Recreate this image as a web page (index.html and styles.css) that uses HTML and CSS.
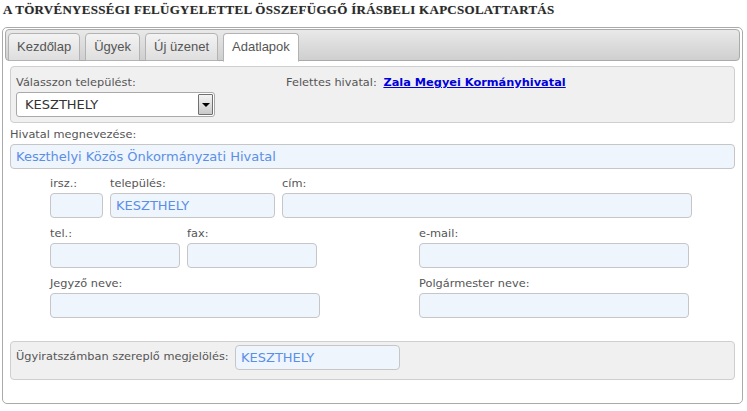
FILE: index.html
```html
<!DOCTYPE html>
<html lang="hu">
<head>
<meta charset="utf-8">
<title>Adatlapok</title>
<link rel="stylesheet" href="styles.css">
</head>
<body>
<h1 class="page-title">A törvényességi felügyelettel összefüggő írásbeli kapcsolattartás</h1>
<div class="widget">
  <div class="tabbar">
    <div class="tab">Kezdőlap</div>
    <div class="tab">Ügyek</div>
    <div class="tab">Új üzenet</div>
    <div class="tab active">Adatlapok</div>
  </div>
  <div class="tab-body">
    <div class="panel panel-top">
      <div class="pick">
        <div class="label">Válasszon települést:</div>
        <div class="select">
          <span class="select-text">KESZTHELY</span>
          <span class="select-btn"><span class="caret"></span></span>
        </div>
      </div>
      <div class="parent">
        <span class="label">Felettes hivatal:</span>
        <a class="link" href="#">Zala Megyei Kormányhivatal</a>
      </div>
    </div>

    <div class="label name-label">Hivatal megnevezése:</div>
    <div class="input full">Keszthelyi Közös Önkormányzati Hivatal</div>

    <div class="fields">
      <div class="row">
        <div class="field w-irsz"><div class="label">irsz.:</div><div class="input"></div></div>
        <div class="field w-telep"><div class="label">település:</div><div class="input">KESZTHELY</div></div>
        <div class="field w-cim"><div class="label">cím:</div><div class="input"></div></div>
      </div>
      <div class="row">
        <div class="field w-tel"><div class="label">tel.:</div><div class="input"></div></div>
        <div class="field w-tel"><div class="label">fax:</div><div class="input"></div></div>
        <div class="field w-wide right-col"><div class="label">e-mail:</div><div class="input"></div></div>
      </div>
      <div class="row">
        <div class="field w-jegyzo"><div class="label">Jegyző neve:</div><div class="input"></div></div>
        <div class="field w-wide right-col2"><div class="label">Polgármester neve:</div><div class="input"></div></div>
      </div>
    </div>

    <div class="panel panel-bottom">
      <div class="label mark-label">Ügyiratszámban szereplő megjelölés:</div>
      <div class="input w-mark">KESZTHELY</div>
    </div>
  </div>
</div>
</body>
</html>
```

FILE: styles.css
```css
* { box-sizing: border-box; }

body {
  margin: 0;
  background: #fff;
  font-family: "DejaVu Sans", Verdana, sans-serif;
  font-size: 11.35px;
  color: #555;
}

.page-title {
  margin: 0;
  padding: 1px 0 0 3px;
  font-family: "Liberation Serif", "Times New Roman", serif;
  font-size: 13px;
  line-height: 18px;
  font-weight: bold;
  letter-spacing: 0.28px;
  text-transform: uppercase;
  color: #2a2a2a;
  text-shadow: 0 0 1px rgba(0,0,0,0.25);
}

.widget {
  margin: 8px 0 0 2px;
  width: 741px;
  border: 1px solid #aaa;
  border-radius: 5px;
  padding: 1px 2px 0 2px;
}

.tabbar {
  display: flex;
  gap: 5px;
  height: 32px;
  padding: 3px 2px 0 2px;
  border: 1px solid #aaa;
  border-radius: 4px;
  background: linear-gradient(#e9e9e9, #cfcfcf);
  align-items: flex-start;
}

.tab {
  height: 28px;
  padding: 0 8px;
  border: 1px solid #b3b3b3;
  border-radius: 4px 4px 0 0;
  background: linear-gradient(#f3f3f3, #dedede);
  font-family: "Liberation Sans", Arial, sans-serif;
  font-size: 13px;
  line-height: 26px;
  color: #555;
}

.tab.active {
  height: 29px;
  background: #fff;
  border-bottom-color: #fff;
}

.tab-body {
  padding: 5px 5px 23px 5px;
}

.panel {
  border: 1px solid #cfcfcf;
  border-radius: 4px;
  background: #f0f0f0;
}

.panel-top {
  display: flex;
  padding: 8px 5px 5px 5px;
}

.pick { width: 270px; }

.label {
  line-height: 15px;
  color: #555;
}

.pick .label { margin-bottom: 2px; }

.select {
  display: flex;
  align-items: center;
  justify-content: space-between;
  width: 199px;
  height: 25px;
  border: 1px solid #a9a9a9;
  border-radius: 3px;
  background: #fff;
  padding: 0 1px 0 8px;
  font-size: 13px;
  color: #333;
}

.select-btn {
  display: flex;
  align-items: center;
  justify-content: center;
  width: 15px;
  height: 21px;
  border: 1px solid #707070;
  border-radius: 1px;
  background: linear-gradient(#f4f4f4, #c9c9c9);
}

.caret {
  width: 0;
  height: 0;
  border-left: 4px solid transparent;
  border-right: 4px solid transparent;
  border-top: 4px solid #000;
}

.parent {
  line-height: 15px;
}

.link {
  margin-left: 3px;
  font-weight: bold;
  color: #0000dd;
  text-decoration: underline;
}

.name-label {
  margin-top: 4px;
  margin-bottom: 2px;
}

.input {
  height: 25px;
  border: 1px solid #c6c6c6;
  border-radius: 4px;
  background: #eef5fd;
  padding: 0 5px;
  font-size: 13px;
  line-height: 23px;
  color: #5b8fe6;
  white-space: nowrap;
}

.fields {
  padding: 7px 0 0 40px;
  display: flex;
  flex-direction: column;
  gap: 8px;
}

.row {
  display: flex;
  gap: 7px;
}

.field .label { margin-bottom: 2px; }

.w-irsz { width: 53px; }
.w-telep { width: 165px; }
.w-cim { width: 410px; }
.w-tel { width: 130px; }
.w-jegyzo { width: 270px; }
.w-wide { width: 270px; }
.right-col { margin-left: 95px; }
.right-col2 { margin-left: 92px; }

.panel-bottom {
  display: flex;
  align-items: flex-start;
  margin-top: 23px;
  padding: 3px 5px 9px 5px;
}

.mark-label {
  width: 219px;
  padding-top: 4px;
}

.w-mark { width: 165px; }
```
